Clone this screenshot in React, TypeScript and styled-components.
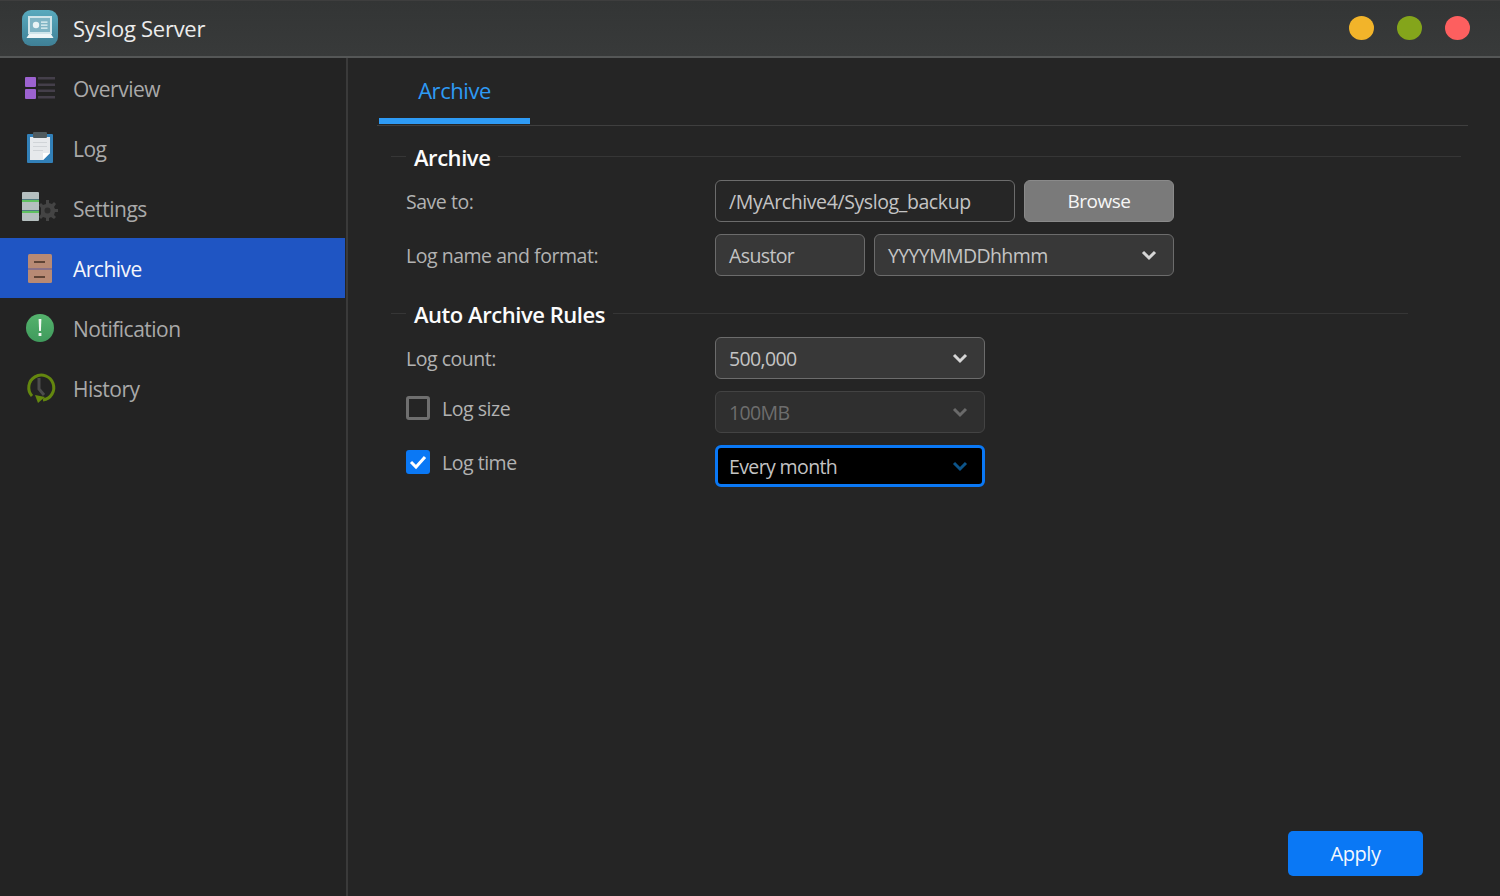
import styled, { createGlobalStyle } from "styled-components";
import type { ReactNode } from "react";

const Global = createGlobalStyle`
  html, body {
    margin: 0;
    height: 100%;
    background: #252525;
  }
  * {
    box-sizing: border-box;
  }
  #root {
    height: 100%;
  }
`;

const font = `"Open Sans", "Noto Sans", sans-serif`;

const Window = styled.div`
  width: 1500px;
  height: 896px;
  display: flex;
  flex-direction: column;
  background: #252525;
  font-family: ${font};
  overflow: hidden;
`;

const TitleBar = styled.header`
  height: 58px;
  flex: none;
  display: flex;
  align-items: center;
  padding: 0 30px 2px 22px;
  gap: 15px;
  background: linear-gradient(#333535, #383a3a);
  border-top: 1px solid #3e3e3e;
  border-bottom: 2px solid #555757;
`;

const AppTitle = styled.div`
  flex: 1;
  font-size: 22px;
  letter-spacing: -0.28px;
  color: #ececec;
`;

const Dots = styled.div`
  display: flex;
  gap: 23px;
`;

const Dot = styled.span<{ $color: string }>`
  width: 25px;
  height: 24px;
  border-radius: 50%;
  background: ${(p) => p.$color};
`;

const Body = styled.div`
  flex: 1;
  display: flex;
  min-height: 0;
`;

const Sidebar = styled.nav`
  width: 348px;
  flex: none;
  background: #232323;
  border-right: 2px solid #3a3a3a;
  padding-right: 1px;
`;

const NavItem = styled.div<{ $active?: boolean }>`
  height: 60px;
  display: flex;
  align-items: center;
  padding: 2px 0 0 22px;
  gap: 15px;
  font-size: 21px;
  letter-spacing: -0.5px;
  background: ${(p) => (p.$active ? "#1f55c3" : "transparent")};
  color: ${(p) => (p.$active ? "#f4f6fb" : "#a9a9a9")};
`;

const NavIcon = styled.svg`
  width: 36px;
  height: 36px;
  flex: none;
`;

const Main = styled.main`
  flex: 1;
  display: flex;
  flex-direction: column;
  min-width: 0;
  padding: 0 32px 20px 29px;
`;

const TabBar = styled.div`
  height: 68px;
  flex: none;
  display: flex;
  padding-left: 2px;
  border-bottom: 1px solid #3f3f3f;
`;

const Tab = styled.div`
  width: 151px;
  height: 66px;
  display: flex;
  align-items: center;
  justify-content: center;
  padding-top: 4px;
  font-size: 22px;
  letter-spacing: -0.45px;
  color: #2e9bf5;
  border-bottom: 6px solid #2e9bf5;
`;

const Section = styled.section<{ $lineEnd: number; $top: number }>`
  margin-top: ${(p) => p.$top}px;
  padding: 0 ${(p) => p.$lineEnd}px 0 14px;
`;

const SectionTitle = styled.h2`
  margin: 0 0 8px;
  height: 32px;
  padding-top: 2px;
  display: flex;
  align-items: center;
  gap: 8px;
  font-size: 22px;
  font-weight: 600;
  letter-spacing: -0.45px;
  color: #fcfcfc;

  &::before {
    content: "";
    width: 15px;
    height: 1px;
    margin-top: -2px;
    background: #363636;
  }

  &::after {
    content: "";
    flex: 1;
    height: 1px;
    margin-top: -2px;
    background: #363636;
  }
`;

const Rows = styled.div`
  display: flex;
  flex-direction: column;
  gap: 12px;
  padding-left: 15px;
`;

const Row = styled.div`
  display: grid;
  grid-template-columns: 309px auto;
  justify-content: start;
  align-items: center;
  height: 42px;
`;

const Label = styled.label<{ $nudge?: number }>`
  display: flex;
  align-items: center;
  gap: 12px;
  font-size: 19.5px;
  letter-spacing: -0.47px;
  color: #b2b2b2;
  padding-bottom: ${(p) => p.$nudge ?? 0}px;
`;

const Controls = styled.div`
  display: flex;
  gap: 9px;
`;

const Field = styled.div<{ $w: number; $variant?: "plain" | "filled" | "disabled" | "focus" }>`
  width: ${(p) => p.$w}px;
  height: 42px;
  display: flex;
  align-items: center;
  justify-content: space-between;
  padding: 0 16px 0 13px;
  border-radius: 6px;
  font-size: 19.5px;
  letter-spacing: ${(p) => (p.$variant === "plain" ? "-0.4px" : "-0.62px")};
  color: ${(p) => (p.$variant === "disabled" ? "#6d6d6d" : "#c4c4c4")};
  background: ${(p) =>
    p.$variant === "plain"
      ? "#262626"
      : p.$variant === "disabled"
        ? "#2f2f2f"
        : p.$variant === "focus"
          ? "#000"
          : "#383838"};
  border: ${(p) =>
    p.$variant === "focus"
      ? "3px solid #0a78f5"
      : p.$variant === "disabled"
        ? "1px solid #434343"
        : "1px solid #6c6c6c"};
  ${(p) => p.$variant === "focus" && "padding: 0 14px 0 11px;"}
`;

const Browse = styled.button`
  width: 150px;
  height: 42px;
  border: 1px solid #8a8a8a;
  border-radius: 6px;
  background: #7a7a7a;
  color: #f6f6f6;
  font-family: ${font};
  font-size: 19px;
  letter-spacing: -0.5px;
`;

const Box = styled.span<{ $checked?: boolean }>`
  width: 24px;
  height: 24px;
  flex: none;
  display: flex;
  align-items: center;
  justify-content: center;
  border-radius: 3px;
  background: ${(p) => (p.$checked ? "#0a78f5" : "transparent")};
  border: ${(p) => (p.$checked ? "none" : "3px solid #6f6f6f")};
`;

const Footer = styled.div`
  margin-top: auto;
  display: flex;
  justify-content: flex-end;
  padding-right: 45px;
`;

const Apply = styled.button`
  width: 135px;
  height: 45px;
  border: none;
  border-radius: 5px;
  background: #0a78f5;
  color: #f4f8fe;
  font-family: ${font};
  font-size: 20px;
  letter-spacing: -0.4px;
`;

const Chevron = ({ color = "#d6d6d6" }: { color?: string }) => (
  <svg width="16" height="12" viewBox="0 0 16 12" fill="none">
    <path d="M2 3l6 6 6-6" stroke={color} strokeWidth="3" />
  </svg>
);

const AppIcon = () => (
  <svg width="36" height="36" viewBox="0 0 36 36">
    <defs>
      <linearGradient id="appBg" x1="0" y1="0" x2="0" y2="1">
        <stop offset="0" stopColor="#58aabe" />
        <stop offset="1" stopColor="#3f8096" />
      </linearGradient>
    </defs>
    <rect width="36" height="36" rx="9" fill="url(#appBg)" />
    <rect x="6" y="6" width="24" height="18" fill="#cfe5ea" />
    <rect x="8" y="8" width="20" height="14" fill="#7fb4c4" />
    <circle cx="14" cy="15" r="3.2" fill="#e8f3f5" />
    <path d="M19 11.5h6.5v1.2H19zM19 14.5h6.5v1.2H19zM19 17.5h6.5v1.2H19z" fill="#e8f3f5" />
    <path d="M7 24h22l2.5 4H4.5z" fill="#eef6f7" />
  </svg>
);

const OverviewIcon = () => (
  <NavIcon viewBox="0 0 36 36">
    <rect x="3" y="6" width="11" height="10" rx="1" fill="#9c62d0" />
    <rect x="3" y="18" width="11" height="10" rx="1" fill="#9c62d0" />
    <path d="M16 6h17v2.500H16zM16 12.500h17v2.500H16zM16 18.500h17v2.500H16zM16 25h17v2.500H16z" fill="#443f4a" />
  </NavIcon>
);

const LogIcon = () => (
  <NavIcon viewBox="0 0 36 36">
    <rect x="5" y="3" width="26" height="29" rx="1" fill="#3280b8" />
    <path d="M8 6h20v16l-7 7H8z" fill="#e6e9ec" />
    <path d="M28 22h-7v7z" fill="#fff" />
    <path d="M11 11h14v1H11zM11 15h14v1H11zM11 19h10v1H11z" fill="#d0d4d8" />
    <rect x="11" y="1" width="14" height="6" rx="1" fill="#4f5a5e" />
  </NavIcon>
);

const SettingsIcon = () => (
  <NavIcon viewBox="0 0 36 36">
    <path
      fill="#444444"
      d="M24 9h3v3l3 1 2-2 2 2-2 3 1 2h3v3h-3l-1 3 2 2-2 2-3-2-2 1v3h-3v-3l-3-1-2 2-2-2 2-3v-6l-2-3 2-2 2 2 3-1z"
    />
    <circle cx="25.500" cy="19.500" r="3" fill="#2c2c2c" />
    <rect x="0" y="1" width="17" height="29" rx="1" fill="#b5bfbf" />
    <rect x="0" y="9" width="17" height="2" fill="#5fc060" />
    <rect x="0" y="20" width="17" height="2" fill="#5fc060" />
    <path d="M0 8h17v1H0zM0 19h17v1H0z" fill="#4f7a80" />
  </NavIcon>
);

const ArchiveIcon = () => (
  <NavIcon viewBox="0 0 36 36">
    <rect x="6" y="3" width="24" height="29" rx="1.500" fill="#b88a74" />
    <rect x="6" y="17" width="24" height="2" fill="#8a7186" />
    <rect x="12" y="10" width="11" height="2" fill="#5f4436" />
    <rect x="12" y="25" width="11" height="2" fill="#5f4436" />
  </NavIcon>
);

const NotificationIcon = () => (
  <NavIcon viewBox="0 0 36 36">
    <defs>
      <linearGradient id="noteBg" x1="0" y1="0" x2="0" y2="1">
        <stop offset="0" stopColor="#55b36d" />
        <stop offset="1" stopColor="#3f9a5c" />
      </linearGradient>
    </defs>
    <circle cx="18" cy="17" r="14" fill="url(#noteBg)" />
    <path d="M16.600 8h2.800l-.5 12h-1.800z" fill="#f2f8f2" />
    <rect x="16.600" y="22" width="2.800" height="3" fill="#f2f8f2" />
  </NavIcon>
);

const HistoryIcon = () => (
  <NavIcon viewBox="0 0 36 36">
    <path d="M21 29A12.500 12.500 0 1 0 10 25" fill="none" stroke="#64870f" strokeWidth="3" />
    <path d="M13 24l10 2-7 6z" fill="#64870f" />
    <path d="M17 7v11l5 6" fill="none" stroke="#4c4c4c" strokeWidth="3" />
  </NavIcon>
);

const navItems: { label: string; icon: ReactNode; active?: boolean }[] = [
  { label: "Overview", icon: <OverviewIcon /> },
  { label: "Log", icon: <LogIcon /> },
  { label: "Settings", icon: <SettingsIcon /> },
  { label: "Archive", icon: <ArchiveIcon />, active: true },
  { label: "Notification", icon: <NotificationIcon /> },
  { label: "History", icon: <HistoryIcon /> },
];

export default function App() {
  return (
    <Window>
      <Global />
      <TitleBar>
        <AppIcon />
        <AppTitle>Syslog Server</AppTitle>
        <Dots>
          <Dot $color="#f2b42a" />
          <Dot $color="#84a51b" />
          <Dot $color="#fd5f5f" />
        </Dots>
      </TitleBar>
      <Body>
        <Sidebar>
          {navItems.map((item) => (
            <NavItem key={item.label} $active={item.active}>
              {item.icon}
              {item.label}
            </NavItem>
          ))}
        </Sidebar>
        <Main>
          <TabBar>
            <Tab>Archive</Tab>
          </TabBar>
          <Section $top={14} $lineEnd={7}>
            <SectionTitle>Archive</SectionTitle>
            <Rows>
              <Row>
                <Label>Save to:</Label>
                <Controls>
                  <Field $w={300} $variant="plain">/MyArchive4/Syslog_backup</Field>
                  <Browse>Browse</Browse>
                </Controls>
              </Row>
              <Row>
                <Label>Log name and format:</Label>
                <Controls>
                  <Field $w={150}>Asustor</Field>
                  <Field $w={300}>
                    YYYYMMDDhhmm
                    <Chevron />
                  </Field>
                </Controls>
              </Row>
            </Rows>
          </Section>
          <Section $top={21} $lineEnd={60}>
            <SectionTitle>Auto Archive Rules</SectionTitle>
            <Rows>
              <Row>
                <Label>Log count:</Label>
                <Controls>
                  <Field $w={270}>
                    500,000
                    <Chevron />
                  </Field>
                </Controls>
              </Row>
              <Row>
                <Label $nudge={8}>
                  <Box />
                  Log size
                </Label>
                <Controls>
                  <Field $w={270} $variant="disabled">
                    100MB
                    <Chevron color="#6a6a6a" />
                  </Field>
                </Controls>
              </Row>
              <Row>
                <Label $nudge={8}>
                  <Box $checked>
                    <svg width="18" height="16" viewBox="0 0 18 16" fill="none">
                      <path d="M2 8l5 5 9-10" stroke="#fff" strokeWidth="3" />
                    </svg>
                  </Box>
                  Log time
                </Label>
                <Controls>
                  <Field $w={270} $variant="focus">
                    Every month
                    <Chevron color="#0d5489" />
                  </Field>
                </Controls>
              </Row>
            </Rows>
          </Section>
          <Footer>
            <Apply>Apply</Apply>
          </Footer>
        </Main>
      </Body>
    </Window>
  );
}
